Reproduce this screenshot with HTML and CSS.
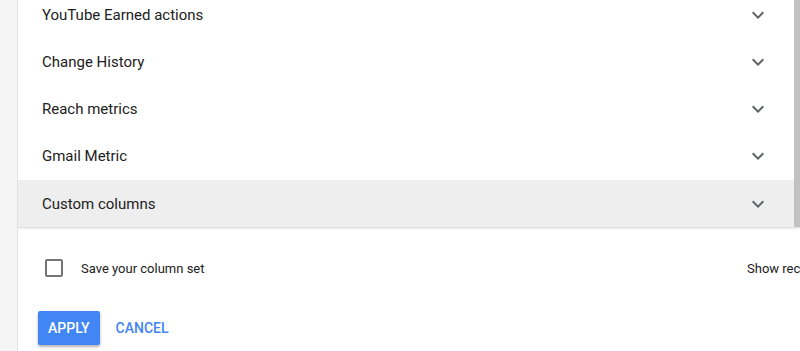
FILE: index.html
```html
<!DOCTYPE html>
<html lang="en">
<head>
  <meta charset="UTF-8" />
  <meta name="viewport" content="width=device-width, initial-scale=1" />
  <title>Modify columns</title>
  <link rel="stylesheet" href="styles.css">
</head>
<body>

  <div class="page">
    <div class="sidebar"></div>
    <div class="main">
      <div class="list">
        <div class="rows">
          <div class="row"><span>YouTube Earned actions</span><svg class="chev" viewBox="0 0 24 24"><path d="M16.59 8.59L12 13.17 7.41 8.59 6 10l6 6 6-6z"/></svg></div>
          <div class="row"><span>Change History</span><svg class="chev" viewBox="0 0 24 24"><path d="M16.59 8.59L12 13.17 7.41 8.59 6 10l6 6 6-6z"/></svg></div>
          <div class="row"><span>Reach metrics</span><svg class="chev" viewBox="0 0 24 24"><path d="M16.59 8.59L12 13.17 7.41 8.59 6 10l6 6 6-6z"/></svg></div>
          <div class="row"><span>Gmail Metric</span><svg class="chev" viewBox="0 0 24 24"><path d="M16.59 8.59L12 13.17 7.41 8.59 6 10l6 6 6-6z"/></svg></div>
          <div class="row active"><span>Custom columns</span><svg class="chev" viewBox="0 0 24 24"><path d="M16.59 8.59L12 13.17 7.41 8.59 6 10l6 6 6-6z"/></svg></div>
        </div>
        <div class="scrollbar"></div>
      </div>

      <div class="footer">
        <div class="options">
          <label class="save">
            <span class="checkbox"></span>
            <span>Save your column set</span>
          </label>
          <span class="show-rec">Show recommendations</span>
        </div>
        <div class="actions">
          <button class="btn-apply">Apply</button>
          <button class="btn-cancel">Cancel</button>
        </div>
      </div>
    </div>
  </div>

</body>
</html>
```

FILE: styles.css
```css
body {
  margin: 0;
  font-family: Roboto, 'Liberation Sans', sans-serif;
  background-color: #fff;
  overflow: hidden;
}

.page {
  display: flex;
  height: 351px;
}

.sidebar {
  width: 17px;
  flex: none;
  background-color: #f5f5f5;
  border-right: 1px solid #e3e3e3;
}

.main {
  flex: 1;
  display: flex;
  flex-direction: column;
  min-width: 0;
  overflow: hidden;
}

/* Lista de secciones */
.list {
  display: flex;
  height: 227px;
  overflow: hidden;
  border-bottom: 1px solid #e0e0e0;
  box-shadow: 0 1px 2px rgba(0, 0, 0, 0.08);
}

.rows {
  flex: 1;
  margin-top: -9px;
}

.row {
  display: flex;
  align-items: center;
  justify-content: space-between;
  height: 47px;
  padding: 0 24px 0 24px;
  font-size: 15px;
  color: #212121;
}

.row.active {
  background-color: #eeeeee;
  margin-top: 1px;
}

.chev {
  width: 24px;
  height: 24px;
  fill: #5f6368;
}

.scrollbar {
  width: 6px;
  flex: none;
  background-color: #c1c1c1;
}

/* Pie */
.footer {
  padding-top: 30px;
}

.options {
  display: flex;
  align-items: center;
  height: 20px;
  white-space: nowrap;
}

.save {
  display: flex;
  align-items: center;
  width: 729px;
  flex: none;
  padding-left: 27px;
  box-sizing: border-box;
  font-size: 13px;
  color: #212121;
}

.checkbox {
  width: 14px;
  height: 14px;
  border: 2px solid #757575;
  border-radius: 2px;
  margin-right: 18px;
}

.show-rec {
  font-size: 13px;
  color: #212121;
}

.actions {
  display: flex;
  align-items: center;
  gap: 8px;
  margin-top: 33px;
  padding-left: 20px;
}

.btn-apply,
.btn-cancel {
  font-family: Roboto, 'Liberation Sans', sans-serif;
  font-size: 14px;
  font-weight: 500;
  text-transform: uppercase;
  border: none;
  cursor: pointer;
  height: 34px;
}

.btn-apply {
  background-color: #4285f4;
  color: #fff;
  padding: 0 10px;
  border-radius: 2px;
  box-shadow: 0 2px 3px rgba(0, 0, 0, 0.3);
}

.btn-cancel {
  background: none;
  color: #4285f4;
  padding: 0 8px;
}
```
